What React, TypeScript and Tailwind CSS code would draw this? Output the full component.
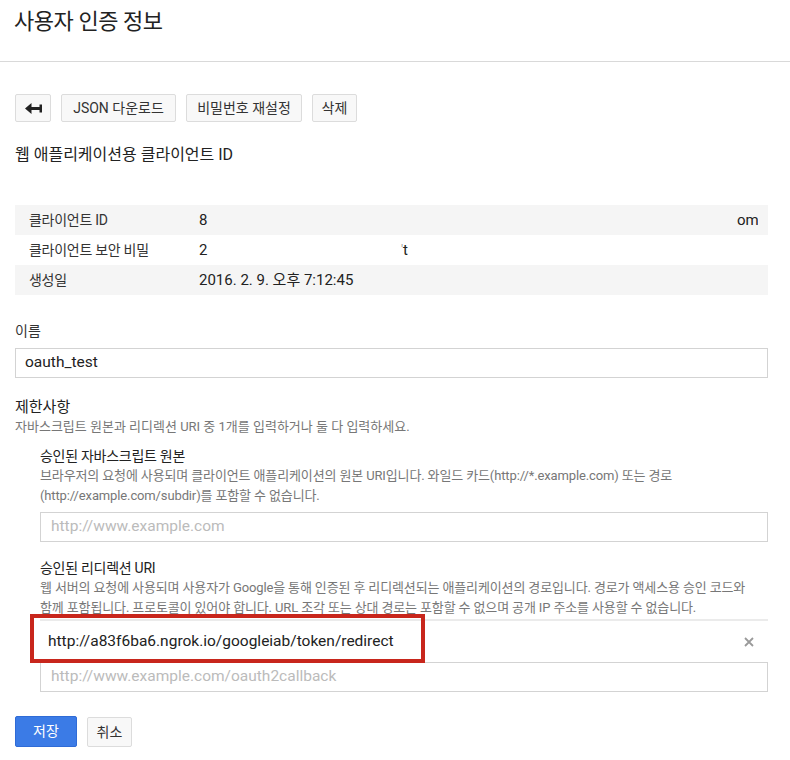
import React from 'react';

const font = { fontFamily: 'Roboto, "Noto Sans CJK KR", sans-serif' };

function Btn({ children, className = '' }: { children: React.ReactNode; className?: string }) {
  return (
    <button
      className={`flex h-[28px] items-center justify-center whitespace-nowrap rounded-[2px] border border-[#dcdcdc] bg-[#f8f8f8] text-[14px] text-[#333] ${className}`}
    >
      {children}
    </button>
  );
}

function InfoRow({ label, shaded, children }: { label: string; shaded?: boolean; children: React.ReactNode }) {
  return (
    <div className={`flex h-[30px] items-center ${shaded ? 'bg-[#f5f5f5]' : 'bg-white'}`}>
      <div className="w-[184px] pl-[14px] text-[14px] tracking-[-0.02em] text-[#333]">{label}</div>
      <div className="flex flex-1 items-center text-[15px] text-[#222]">{children}</div>
    </div>
  );
}

export default function App() {
  return (
    <div className="h-[760px] w-[790px] overflow-hidden bg-white" style={font}>
      {/* 헤더 */}
      <div className="h-[62px] border-b border-[#d9d9d9] px-[14px] pt-[6px]">
        <h1 className="text-[22px] leading-[32px] tracking-[-0.02em] text-[#222]">사용자 인증 정보</h1>
      </div>

      <div className="px-[15px]">
        {/* 액션 버튼 */}
        <div className="mt-[32px] flex gap-[10px]">
          <Btn className="w-[36px]">
            <svg width="17" height="11" viewBox="0 0 17 11">
              <path d="M0 5.5 L6.5 0 L6.5 4 L14.5 4 L14.5 1.5 L17 1.5 L17 9.5 L14.5 9.5 L14.5 7 L6.5 7 L6.5 11 Z" fill="#222" />
            </svg>
          </Btn>
          <Btn className="w-[115px]">JSON 다운로드</Btn>
          <Btn className="w-[116px]">비밀번호 재설정</Btn>
          <Btn className="w-[45px]">삭제</Btn>
        </div>

        <h2 className="mt-[21px] text-[16px] leading-[24px] text-[#222]">웹 애플리케이션용 클라이언트 ID</h2>

        {/* 정보 테이블 */}
        <div className="mt-[38px] w-[753px]">
          <InfoRow label="클라이언트 ID" shaded>
            <span>8</span>
            <span className="ml-auto mr-[10px] inline-block w-[21px] overflow-hidden whitespace-nowrap text-right">om</span>
          </InfoRow>
          <InfoRow label="클라이언트 보안 비밀">
            <span className="w-[202px]">2</span>
            <span className="text-[12px] text-[#999]">'</span>
            <span>t</span>
          </InfoRow>
          <InfoRow label="생성일" shaded>
            <span>2016. 2. 9. 오후 7:12:45</span>
          </InfoRow>
        </div>

        {/* 이름 */}
        <div className="mt-[26px] text-[14px] leading-[20px] text-[#333]">이름</div>
        <div className="mt-[7px] flex h-[30px] w-[753px] items-center border border-[#d3d3d3] px-[9px] text-[15.5px] text-[#222]">
          oauth_test
        </div>

        {/* 제한사항 */}
        <div className="mt-[19px] text-[15px] leading-[20px] text-[#222]">제한사항</div>
        <div className="text-[13px] leading-[20px] text-[#777]">
          자바스크립트 원본과 리디렉션 URI 중 1개를 입력하거나 둘 다 입력하세요.
        </div>

        <div className="pl-[25px]">
          <div className="mt-[9px] text-[14px] leading-[20px] tracking-[-0.02em] text-[#222]">승인된 자바스크립트 원본</div>
          <div className="text-[13px] leading-[20px] tracking-[-0.01em] text-[#777]">
            브라우저의 요청에 사용되며 클라이언트 애플리케이션의 원본 URI입니다. 와일드 카드(http://*.example.com) 또는 경로
            <br />
            (http://example.com/subdir)를 포함할 수 없습니다.
          </div>
          <div className="mt-[6px] flex h-[30px] w-[728px] items-center border border-[#d3d3d3] px-[10px] text-[15.5px] text-[#bbb]">
            http://www.example.com
          </div>

          <div className="mt-[16px] text-[14px] leading-[20px] tracking-[-0.02em] text-[#222]">승인된 리디렉션 URI</div>
          <div className="text-[13px] leading-[20px] tracking-[-0.01em] text-[#777]">
            웹 서버의 요청에 사용되며 사용자가 Google을 통해 인증된 후 리디렉션되는 애플리케이션의 경로입니다. 경로가 액세스용 승인 코드와
            <br />
            함께 포함됩니다. 프로토콜이 있어야 합니다. URL 조각 또는 상대 경로는 포함할 수 없으며 공개 IP 주소를 사용할 수 없습니다.
          </div>

          <div className="relative mt-[1px] flex h-[44px] w-[728px] items-center border-t-2 border-[#ebebeb] pl-[8px] pr-[14px] text-[15.5px] text-[#222]">
            <span>http://a83f6ba6.ngrok.io/googleiab/token/redirect</span>
            <svg className="ml-auto" width="10" height="10" viewBox="0 0 10 10">
              <path d="M1 1 L9 9 M9 1 L1 9" stroke="#9a9a9a" strokeWidth="1.8" />
            </svg>
            <div className="pointer-events-none absolute left-[-10px] top-[-7px] h-[49px] w-[395px] border-[4px] border-[#c8261c]" />
          </div>
          <div className="-mt-[1px] flex h-[30px] w-[728px] items-center border border-[#d3d3d3] px-[10px] text-[15.5px] text-[#bbb]">
            http://www.example.com/oauth2callback
          </div>
        </div>

        {/* 저장 / 취소 */}
        <div className="mt-[24px] flex items-start gap-[10px]">
          <button className="h-[31px] w-[62px] rounded-[2px] border border-[#2f6bd6] bg-[#3b7be6] text-[14px] text-white">
            저장
          </button>
          <button className="mt-[1px] h-[30px] w-[45px] rounded-[2px] border border-[#dcdcdc] bg-[#f8f8f8] text-[14px] text-[#333]">
            취소
          </button>
        </div>
      </div>
    </div>
  );
}
